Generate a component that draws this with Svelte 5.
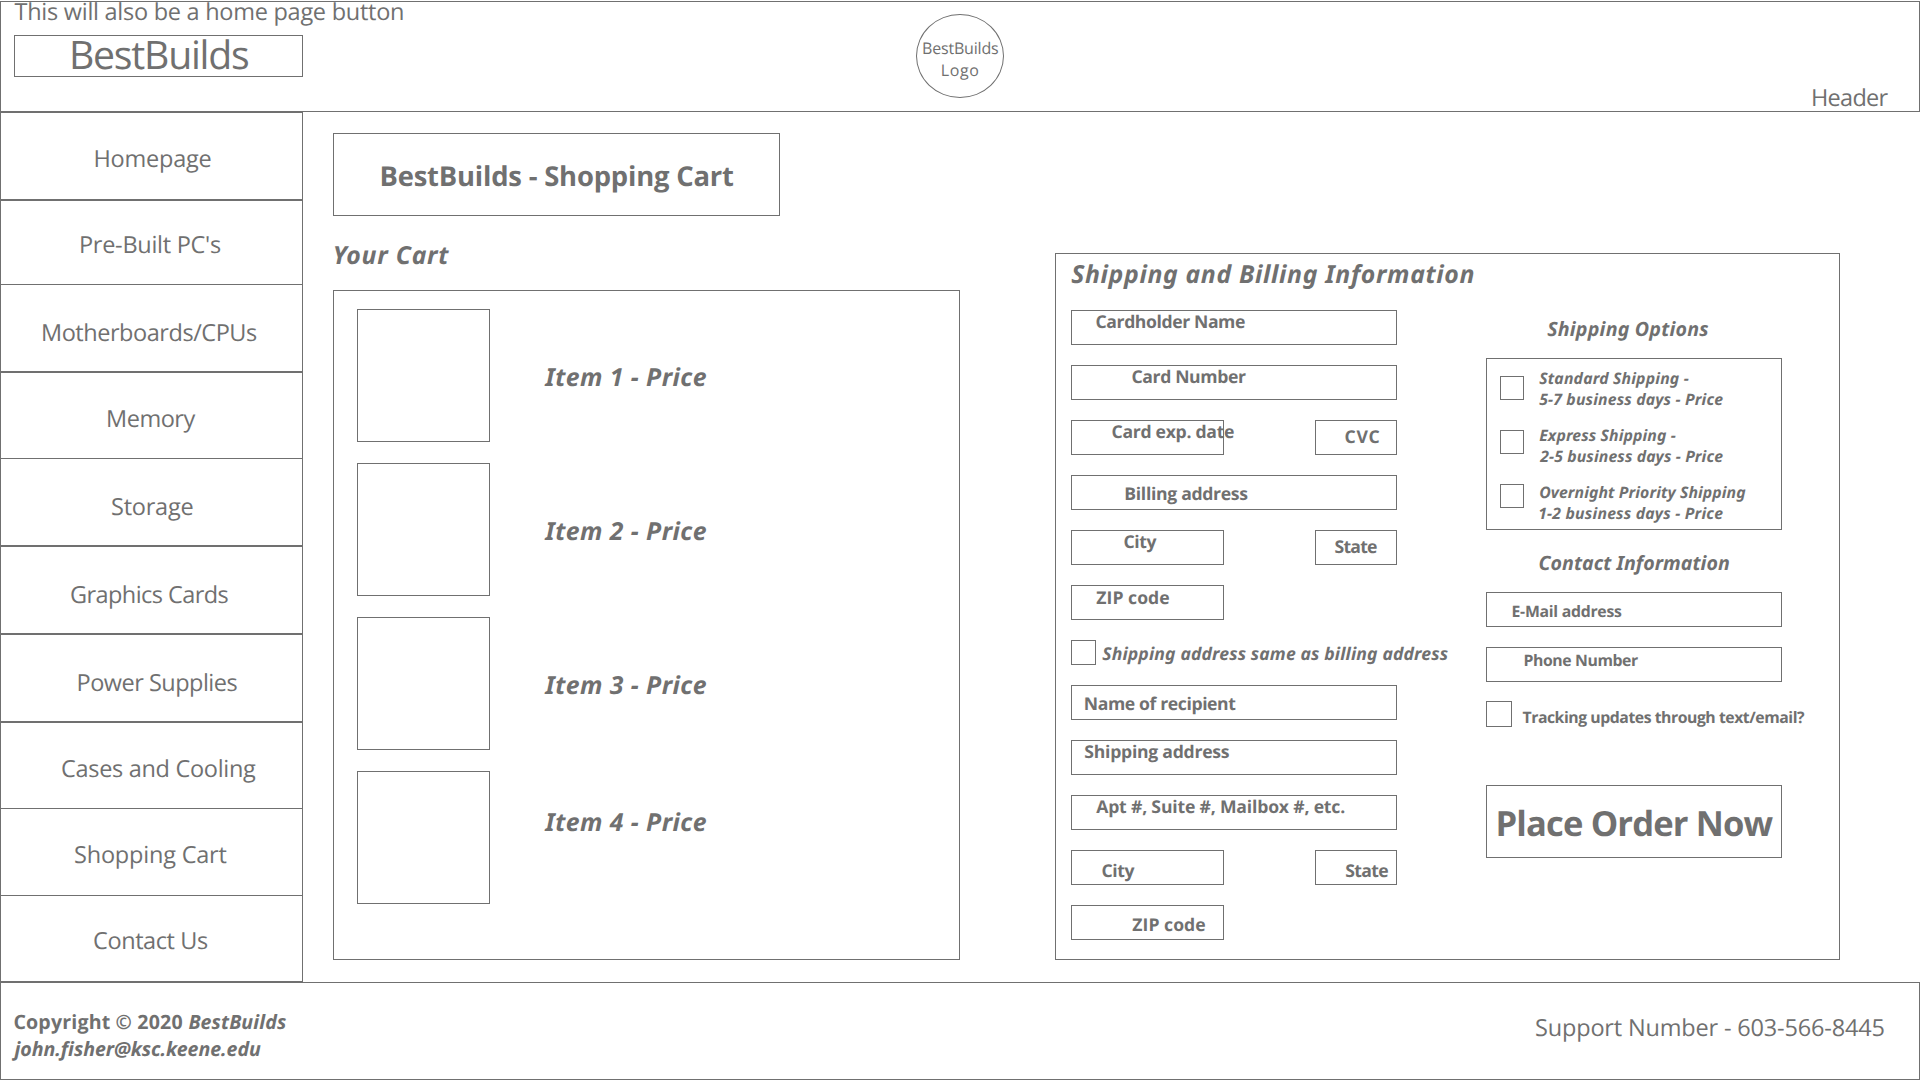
<script>
  // Menu rows: label, left edge, baseline, label width, row height, and whether the row draws its own top line
  const menu = [
    { text: 'Homepage', x: 94.5, y: 54, w: 115, h: 88, top: true },
    { text: "Pre-Built PC's", x: 80, y: 52, w: 140, h: 85, top: true },
    { text: 'Motherboards/CPUs', x: 42, y: 56, w: 214, h: 87, top: false },
    { text: 'Memory', x: 107, y: 54, w: 87.5, h: 87, top: true },
    { text: 'Storage', x: 111, y: 56, w: 80.5, h: 87, top: false },
    { text: 'Graphics Cards', x: 70, y: 56, w: 157.5, h: 88, top: true },
    { text: 'Power Supplies', x: 77.5, y: 56, w: 159, h: 88, top: true },
    { text: 'Cases and Cooling', x: 61, y: 54, w: 194, h: 87, top: true },
    { text: 'Shopping Cart', x: 74, y: 54, w: 151.5, h: 87, top: false },
    { text: 'Contact Us', x: 93, y: 53, w: 114, h: 86, top: false }
  ];

  const items = [
    { text: 'Item 1 - Price', y: 78 },
    { text: 'Item 2 - Price', y: 78 },
    { text: 'Item 3 - Price', y: 78 },
    { text: 'Item 4 - Price', y: 61 }
  ];

  const billing = [
    [{ text: 'Cardholder Name', x: 24.5, y: 18, w: 148.5, size: 'wide' }],
    [{ text: 'Card Number', x: 60.5, y: 18, w: 113.5, size: 'wide' }],
    [
      { text: 'Card exp. date', x: 40.5, y: 18, w: 121.5, size: 'half' },
      { text: 'CVC', x: 29.5, y: 23, w: 34, size: 'small' }
    ],
    [{ text: 'Billing address', x: 53.3, y: 25, w: 123, size: 'wide' }],
    [
      { text: 'City', x: 52.5, y: 18, w: 33, size: 'half' },
      { text: 'State', x: 18.5, y: 23, w: 42.5, size: 'small' }
    ],
    [{ text: 'ZIP code', x: 24.3, y: 19, w: 73, size: 'half' }]
  ];

  const shipping = [
    [{ text: 'Name of recipient', x: 12.8, y: 25, w: 151.5, size: 'wide' }],
    [{ text: 'Shipping address', x: 12.3, y: 18, w: 145.5, size: 'wide' }],
    [{ text: 'Apt #, Suite #, Mailbox #, etc.', x: 24.2, y: 18, w: 249, size: 'wide' }],
    [
      { text: 'City', x: 30.5, y: 27, w: 33, size: 'half' },
      { text: 'State', x: 29.2, y: 27, w: 43, size: 'small' }
    ],
    [{ text: 'ZIP code', x: 60.3, y: 26, w: 73, size: 'half' }]
  ];

  const options = [
    [{ text: 'Standard Shipping -', w: 149.5 }, { text: '5-7 business days - Price', w: 184 }],
    [{ text: 'Express Shipping -', w: 136.5 }, { text: '2-5 business days - Price', w: 184 }],
    [{ text: 'Overnight Priority Shipping', w: 207 }, { text: '1-2 business days - Price', w: 184 }]
  ];

  const ctx = document.createElement('canvas').getContext('2d');

  // Tracks a label so that its ink spans exactly the width of its box
  function fit(node, width) {
    const style = getComputedStyle(node);
    ctx.font = `${style.fontStyle} ${style.fontWeight} ${style.fontSize} ${style.fontFamily}`;
    ctx.textRendering = 'geometricPrecision';
    const m = ctx.measureText(node.textContent);
    const ink = m.actualBoundingBoxLeft + m.actualBoundingBoxRight;
    node.style.letterSpacing = `${(width - ink) / (node.textContent.length - 1)}px`;
    node.style.textIndent = `${m.actualBoundingBoxLeft}px`;
  }

  const rise = (size) => Math.round(size * 1.069);
</script>

{#snippet label(text, x, y, w, size, kind)}
  <span
    class="label {kind}"
    style="margin-left:{x}px;margin-top:{y - rise(size)}px;width:{w}px;font-size:{size}px"
    use:fit={w}>{text}</span>
{/snippet}

{#snippet fieldRow(row)}
  <div class="field-row">
    {#each row as f}
      <div class="field {f.size}">{@render label(f.text, f.x, f.y, f.w, 17.6, 'bold')}</div>
    {/each}
  </div>
{/snippet}

<div class="page">
  <header>
    <div class="header-left">
      <div class="note">{@render label('This will also be a home page button', 13.5, 18, 388.5, 23.5, '')}</div>
      <div class="brand">{@render label('BestBuilds', 57, 34, 176, 39.2, '')}</div>
    </div>
    <div class="logo">
      <div class="logo-line">{@render label('BestBuilds', 6, 39, 75, 16, '')}</div>
      <div class="logo-line">{@render label('Logo', 24.7, 39, 36.5, 16, '')}</div>
    </div>
    <div class="header-right">{@render label('Header', 809, 104, 75.5, 23.5, '')}</div>
  </header>

  <div class="middle">
    <nav>
      {#each menu as m}
        <div class="menu-item" class:top={m.top} style="height:{m.h}px">
          {@render label(m.text, m.x, m.y, m.w, 23.5, '')}
        </div>
      {/each}
    </nav>

    <section class="cart">
      <div class="title">{@render label('BestBuilds - Shopping Cart', 47.5, 53, 351.5, 27.4, 'bold')}</div>
      <div class="cart-heading">{@render label('Your Cart', 1.8, 49, 114.5, 24.8, 'bold italic')}</div>
      <div class="cart-list">
        {#each items as it}
          <div class="cart-item">
            <div class="thumb"></div>
            {@render label(it.text, 54.3, it.y, 162.5, 24.8, 'bold italic')}
          </div>
        {/each}
      </div>
    </section>

    <section class="checkout">
      <div class="checkout-heading">
        {@render label('Shipping and Billing Information', 15.2, 30, 402.3, 24.8, 'bold italic')}
      </div>
      <div class="columns">
        <div class="address">
          {#each billing as row}{@render fieldRow(row)}{/each}
          <div class="same">
            <div class="check c25"></div>
            {@render label('Shipping address same as billing address', 6.2, 21, 345.5, 17.6, 'bold italic')}
          </div>
          {#each shipping as row}{@render fieldRow(row)}{/each}
        </div>

        <div class="extras">
          <div class="options-heading">{@render label('Shipping Options', 61.2, 26, 161, 19.6, 'bold italic')}</div>
          <div class="options">
            <div class="checks">
              {#each options as _}<div class="check c24"></div>{/each}
            </div>
            <div class="option-texts">
              {#each options as lines}
                <div class="option">
                  {#each lines as l}
                    <div class="option-line">{@render label(l.text, 0.2, 25, l.w, 15.8, 'bold italic')}</div>
                  {/each}
                </div>
              {/each}
            </div>
          </div>
          <div class="contact-heading">{@render label('Contact Information', 53.5, 40, 189.5, 19.6, 'bold italic')}</div>
          <div class="contact-fields">
            <div class="field">{@render label('E-Mail address', 25.5, 24, 109.5, 15.8, 'bold')}</div>
            <div class="field">{@render label('Phone Number', 37.5, 18, 113.5, 15.8, 'bold')}</div>
          </div>
          <div class="tracking">
            <div class="check c26"></div>
            {@render label('Tracking updates through text/email?', 10.5, 22, 282.5, 15.8, 'bold')}
          </div>
          <div class="order">{@render label('Place Order Now', 11.5, 51, 275, 34.6, 'bold')}</div>
        </div>
      </div>
    </section>
  </div>

  <footer>
    <div class="credits">
      <div class="credit-line">
        {@render label('Copyright © 2020', 13.4, 46, 168, 19.6, 'bold')}
        {@render label('BestBuilds', 6, 46, 97.5, 19.6, 'bold italic')}
      </div>
      <div class="credit-line">{@render label('john.fisher@ksc.keene.edu', 10.5, 46, 249.5, 19.6, 'bold italic')}</div>
    </div>
    <div class="support">{@render label('Support Number - 603-566-8445', 0, 53, 348.5, 23.5, '')}</div>
  </footer>
</div>

<style>
  :global(body) {
    background: #fff;
    overflow: hidden;
  }
  .page {
    width: 1920px;
    height: 1080px;
    padding-top: 1px;
    color: #707070;
    font-family: 'Open Sans', 'Noto Sans', sans-serif;
    text-rendering: geometricPrecision;
  }
  .page, .page :global(*) {
    box-sizing: border-box;
  }
  .label {
    display: block;
    flex: none;
    line-height: normal;
    white-space: nowrap;
  }
  .bold { font-weight: 700; }
  .italic { font-family: 'Noto Sans', 'Open Sans', sans-serif; font-style: italic; }

  header {
    display: flex;
    height: 111px;
    border: 1px solid #707070;
  }
  .header-left { width: 915px; }
  .note { display: flex; height: 33px; }
  .brand {
    display: flex;
    width: 289px;
    height: 42px;
    margin-left: 13px;
    border: 1px solid #707070;
  }
  .logo {
    width: 88px;
    height: 84px;
    margin-top: 12px;
    border: 1px solid #707070;
    border-radius: 50%;
  }
  .logo-line { display: flex; height: 22px; }
  .header-right { display: flex; }

  .middle { display: flex; height: 870px; }
  nav { width: 303px; }
  .menu-item {
    display: flex;
    border: 1px solid #707070;
    border-top: 0;
  }
  .menu-item.top { border-top: 1px solid #707070; }

  .cart { width: 627px; margin-left: 30px; padding-top: 21px; }
  .title {
    display: flex;
    width: 447px;
    height: 83px;
    border: 1px solid #707070;
  }
  .cart-heading { display: flex; height: 74px; }
  .cart-list {
    display: flex;
    flex-direction: column;
    gap: 21px;
    height: 670px;
    padding: 18px 0 0 23px;
    border: 1px solid #707070;
  }
  .cart-item { display: flex; height: 133px; }
  .thumb { width: 133px; height: 133px; border: 1px solid #707070; }

  .checkout {
    width: 785px;
    height: 707px;
    margin: 141px 0 0 95px;
    border: 1px solid #707070;
  }
  .checkout-heading { display: flex; height: 56px; }
  .columns { display: flex; gap: 89px; padding-left: 15px; }
  .address {
    display: flex;
    flex-direction: column;
    gap: 20px;
    width: 326px;
  }
  .field-row { display: flex; justify-content: space-between; }
  .field { display: flex; height: 35px; border: 1px solid #707070; }
  .wide { width: 326px; }
  .half { width: 153px; }
  .small { width: 82px; }
  .same { display: flex; height: 25px; }
  .check { flex: none; border: 1px solid #707070; }
  .c24 { width: 24px; height: 24px; }
  .c25 { width: 25px; height: 25px; }
  .c26 { width: 26px; height: 26px; }

  .extras { width: 296px; }
  .options-heading { display: flex; height: 48px; }
  .options {
    display: flex;
    gap: 15px;
    height: 172px;
    padding-left: 13px;
    border: 1px solid #707070;
  }
  .checks {
    display: flex;
    flex-direction: column;
    gap: 30px;
    padding-top: 17px;
  }
  .option { height: 57px; }
  .option-line { display: flex; height: 21px; }
  .contact-heading { display: flex; height: 62px; }
  .contact-fields { display: flex; flex-direction: column; gap: 20px; }
  .tracking { display: flex; height: 26px; margin-top: 19px; }
  .order {
    display: flex;
    height: 73px;
    margin-top: 58px;
    border: 1px solid #707070;
  }

  footer {
    display: flex;
    height: 98px;
    border: 1px solid #707070;
  }
  .credits { width: 1535px; }
  .credit-line { display: flex; height: 27px; }
  .support { display: flex; }
</style>
